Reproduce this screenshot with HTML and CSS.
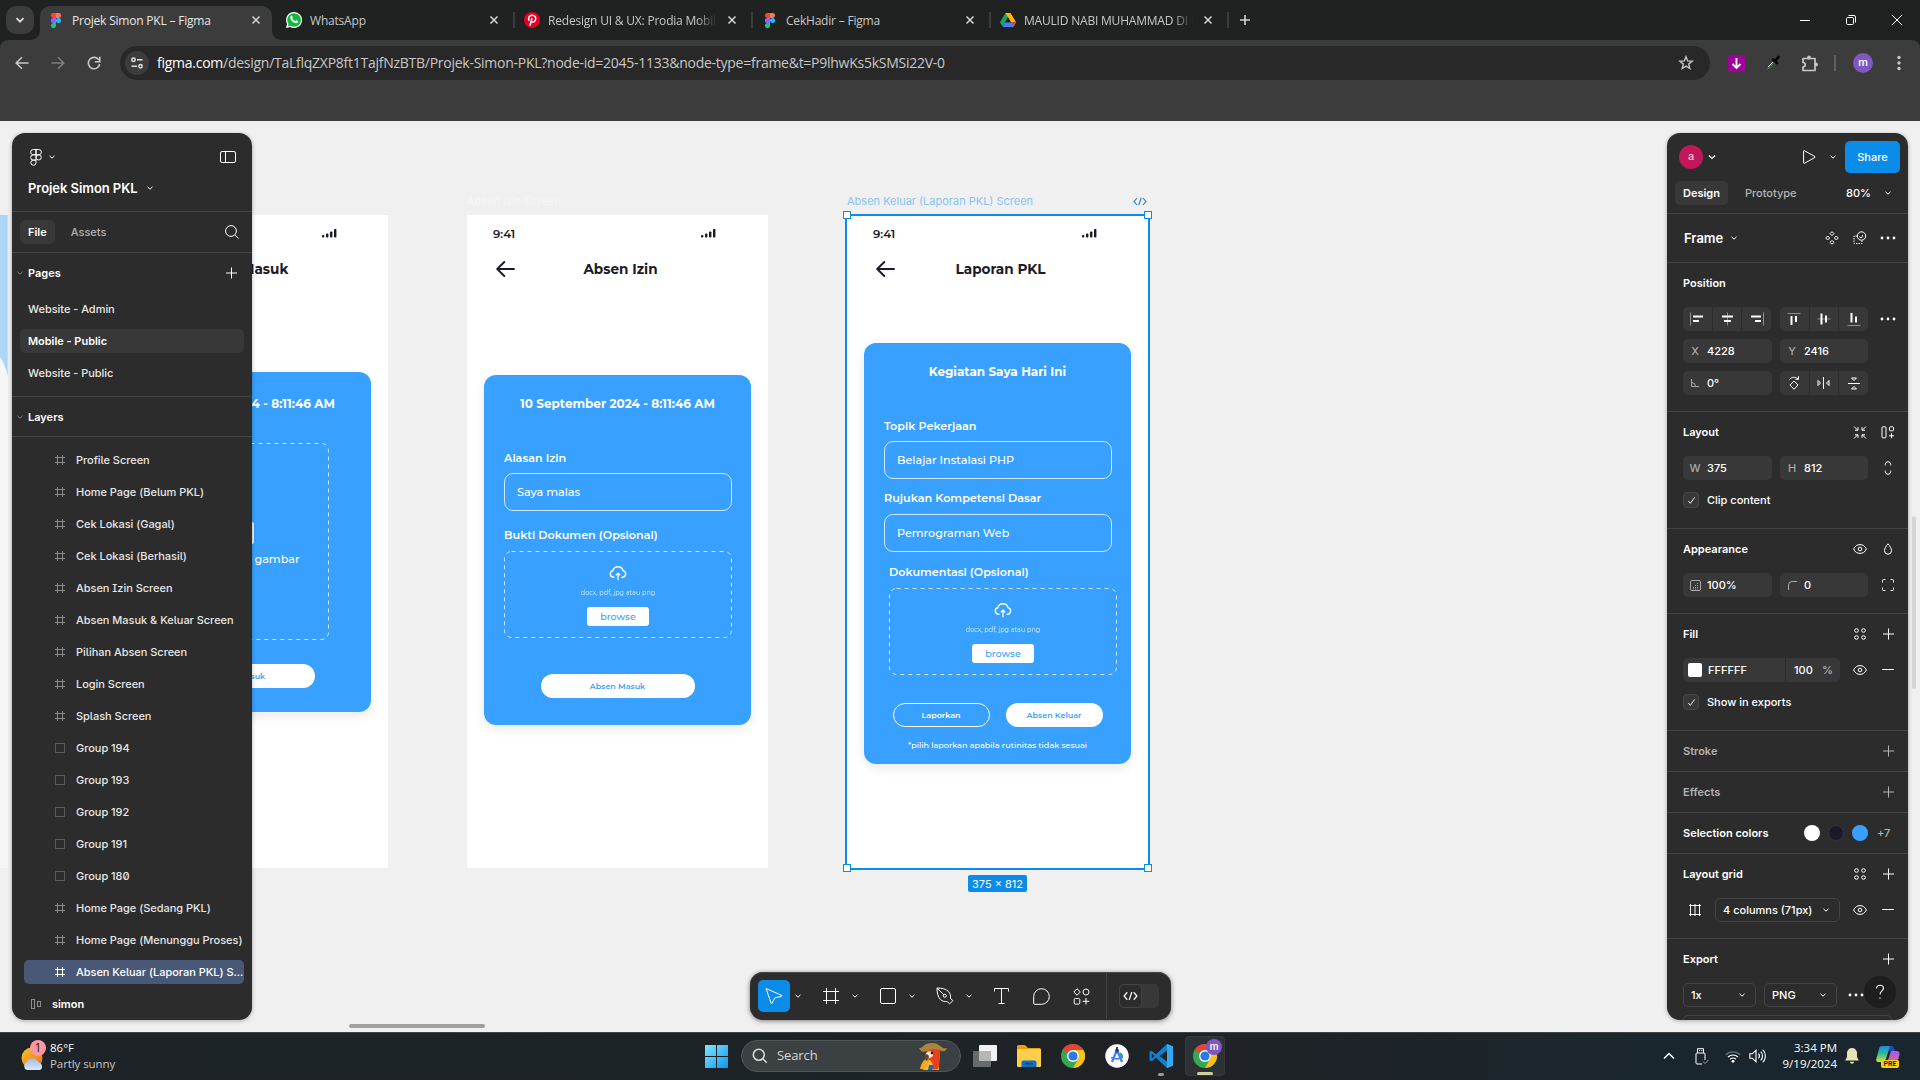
FILE: index.html
```html
<!DOCTYPE html>
<html lang="en">
<head>
<meta charset="utf-8">
<title>Projek Simon PKL – Figma</title>
<link rel="stylesheet" href="styles.css">
</head>
<body>
<svg class="sprite" aria-hidden="true">
  <symbol id="chev" viewBox="0 0 8 8"><path d="M1.500 2.800 4 5.200l2.500-2.400" fill="none" stroke="currentColor"/></symbol>
  <symbol id="x" viewBox="0 0 10 10"><path d="m1.500 1.500 7 7m0-7-7 7" fill="none" stroke="currentColor" stroke-width="1.500"/></symbol>
  <symbol id="plus" viewBox="0 0 12 12"><path d="M6.500 .5v11M1 6h11" fill="none" stroke="currentColor"/></symbol>
  <symbol id="minus" viewBox="0 0 12 12"><path d="M0 5.500h12" fill="none" stroke="currentColor"/></symbol>
  <symbol id="more" viewBox="0 0 16 4"><circle cx="2" cy="2" r="1.400"/><circle cx="8" cy="2" r="1.400"/><circle cx="14" cy="2" r="1.400"/></symbol>
  <symbol id="figma" viewBox="0 0 11 16"><path d="M2.700 0h2.800v5.300H2.700a2.650 2.650 0 0 1 0-5.300z" fill="#f24e1e"/><path d="M5.500 0h2.800a2.650 2.650 0 0 1 0 5.300H5.500z" fill="#ff7262"/><path d="M2.700 5.300h2.800v5.400H2.700a2.700 2.700 0 0 1 0-5.400z" fill="#a259ff"/><circle cx="8.200" cy="8" r="2.700" fill="#1abcfe"/><path d="M2.700 10.700h2.800v2.600a2.700 2.700 0 1 1-2.800-2.600z" fill="#0acf83"/></symbol>
  <symbol id="frame" viewBox="0 0 10 10"><path d="M2.500 0v10M7.500 0v10M0 2.500h10M0 7.500h10" fill="none" stroke="currentColor"/></symbol>
  <symbol id="group" viewBox="0 0 10 10"><rect x=".5" y=".5" width="9" height="9" fill="none" stroke="currentColor" stroke-dasharray="1 1"/></symbol>
  <symbol id="eye" viewBox="0 0 14 10"><path d="M.6 5C2 2 4.300.6 7 .6S12 2 13.400 5C12 8 9.700 9.400 7 9.400S2 8 .6 5z" fill="none" stroke="currentColor"/><circle cx="7" cy="5" r="1.800" fill="none" stroke="currentColor"/></symbol>
  <symbol id="four" viewBox="0 0 12 12"><g fill="none" stroke="currentColor"><circle cx="2.500" cy="2.500" r="1.800"/><circle cx="9.500" cy="2.500" r="1.800"/><circle cx="2.500" cy="9.500" r="1.800"/><circle cx="9.500" cy="9.500" r="1.800"/></g></symbol>
  <symbol id="check" viewBox="0 0 10 10"><path d="m1.500 5.500 2.200 2.700L8.500 1.500" fill="none" stroke="currentColor"/></symbol>
  <symbol id="signal" viewBox="0 0 15 9"><rect y="6" width="2.300" height="2.500" rx=".8"/><rect x="4" y="4.500" width="2.400" height="4" rx=".8"/><rect x="8" y="2.500" width="2.400" height="6" rx=".8"/><rect x="12" y="0" width="2.400" height="8.500" rx=".8"/></symbol>
  <symbol id="back" viewBox="0 0 19 16"><path d="M18 8H1.200M8.300 1 1.200 8l7.100 7" fill="none" stroke="currentColor" stroke-width="1.900" stroke-linecap="round" stroke-linejoin="round"/></symbol>
  <symbol id="cloud" viewBox="0 0 18 15"><path d="M5 11.200H4.300a3.300 3.300 0 0 1-.5-6.500A5.300 5.300 0 0 1 14 4.600a3.350 3.350 0 0 1-.3 6.600H13" fill="none" stroke="currentColor" stroke-width="1.400" stroke-linecap="round"/><path d="M9 14.200V7.500M6.800 9.300 9 7.200l2.200 2.100" fill="none" stroke="currentColor" stroke-width="1.300"/></symbol>
  <symbol id="code" viewBox="0 0 14 9"><path d="M4 1 1 4.500 4 8M10 1l3 3.500L10 8M8.200.8 5.800 8.200" fill="none" stroke="currentColor" stroke-width="1.100"/></symbol>
  <symbol id="chrome" viewBox="0 0 24 24"><circle cx="12" cy="12" r="12" fill="#34a853"/><path d="M12 0a12 12 0 0 1 10.400 6H12a6 6 0 0 0-5.200 3L1.600 6A12 12 0 0 1 12 0z" fill="#ea4335"/><path d="M22.400 6A12 12 0 0 1 12 24l5.200-9A6 6 0 0 0 17.200 9L12 6z" fill="#fbc116"/><circle cx="12" cy="12" r="6" fill="#fff"/><circle cx="12" cy="12" r="4.600" fill="#2a78ea"/></symbol>
</svg>

<header class="browser">
  <div class="tabstrip">
    <div class="tab-search"><svg width="10" height="10" viewBox="0 0 10 10"><path d="m1.500 3.200 3.500 3.500 3.500-3.500" fill="none" stroke="currentColor" stroke-width="1.800"/></svg></div>
    <div class="tab tab--active"><svg class="fav" width="16" height="15"><use href="#figma"/></svg><span class="tab-title">Projek Simon PKL – Figma</span><svg width="10" height="10"><use href="#x"/></svg></div>
    <div class="tab"><svg class="fav" width="16" height="16" viewBox="0 0 16 16"><path d="M8 0a8 8 0 1 1-3.800 15L0 16l1.100-4A8 8 0 0 1 8 0z" fill="#fff"/><path d="M8 1.200a6.800 6.800 0 1 1-3.600 12.500l-2.600.7.700-2.500A6.800 6.800 0 0 1 8 1.200z" fill="#12b83f"/><path d="M5.200 3.800c.8-.5 1.200.3 1.500 1.200.2.600-.5 1-.4 1.300a5 5 0 0 0 3 2.800c.4 0 .7-1 1.200-.8 1 .4 1.800.6 1.600 1.400-.3 1.300-1.700 1.700-3 1.300C6.600 10.200 4.800 8.300 4.300 6c-.2-1 .2-1.700.9-2.200z" fill="#fff"/></svg><span class="tab-title">WhatsApp</span><svg width="10" height="10"><use href="#x"/></svg></div>
    <div class="tab tab--split"><svg class="fav" width="16" height="16" viewBox="0 0 16 16"><circle cx="8" cy="8" r="8" fill="#e60023"/><path d="M6 13.800 8 6M5.300 8.800C3.600 6.500 5 3.200 8.200 3.200c3 0 4 2.300 3.300 4.600-.7 2.500-3.200 2.900-4 1.300" fill="none" stroke="#fff" stroke-width="1.500"/></svg><span class="tab-title tab-title--fade">Redesign UI &amp; UX: Prodia Mobile</span><svg width="10" height="10"><use href="#x"/></svg></div>
    <div class="tab tab--split"><svg class="fav" width="16" height="15"><use href="#figma"/></svg><span class="tab-title">CekHadir – Figma</span><svg width="10" height="10"><use href="#x"/></svg></div>
    <div class="tab tab--split"><svg class="fav" width="16" height="14" viewBox="0 0 16 14"><path d="M5.500 0h5L5.300 9l-2.800 4.500L0 9.200z" fill="#1ea362"/><path d="M5.500 0h5L16 9.200h-5z" fill="#ffba00"/><path d="M4.800 9.200H16L13.500 14h-11z" fill="#3f82f8"/><path d="M11 9.200h5L13.500 14z" fill="#ea4335"/><path d="M8 4.600 10.700 9.200H5.300z" fill="#1f2221"/></svg><span class="tab-title tab-title--fade">MAULID NABI MUHAMMAD DI ML</span><svg width="10" height="10"><use href="#x"/></svg></div>
    <div class="new-tab"><svg width="12" height="12" viewBox="0 0 12 12"><path d="M6 1v10M1 6h10" stroke="currentColor" stroke-width="1.600"/></svg></div>
    <div class="win-controls">
      <svg width="10" height="10" viewBox="0 0 10 10"><path d="M0 5.500h10" stroke="currentColor"/></svg>
      <svg width="10" height="10" viewBox="0 0 10 10"><g fill="none" stroke="currentColor"><rect x=".5" y="2.500" width="7" height="7" rx="1.200"/><path d="M2.500.5H8A1.500 1.500 0 0 1 9.500 2v5.500"/></g></svg>
      <svg width="10" height="10" viewBox="0 0 10 10"><path d="m0 0 10 10M10 0 0 10" stroke="currentColor"/></svg>
    </div>
  </div>
  <div class="toolbar">
    <svg width="14" height="14" viewBox="0 0 14 14"><path d="M13.500 7H1.500M7 1.200 1.200 7 7 12.800" fill="none" stroke="currentColor" stroke-width="1.600"/></svg>
    <svg class="dim" width="14" height="14" viewBox="0 0 14 14"><path d="M.5 7h12M7 1.200 12.800 7 7 12.800" fill="none" stroke="currentColor" stroke-width="1.600"/></svg>
    <svg width="14" height="14" viewBox="0 0 14 14"><path d="M12 4.200A5.700 5.700 0 1 0 12.700 8" fill="none" stroke="currentColor" stroke-width="1.600"/><path d="M12.800.8v5H7.800" fill="none" stroke="currentColor" stroke-width="1.600"/></svg>
    <div class="omnibox">
      <span class="site-info"><svg width="12" height="12" viewBox="0 0 12 12"><g fill="none" stroke="currentColor" stroke-width="1.500"><circle cx="2.500" cy="2.700" r="1.700"/><path d="M6 2.700h5.500M.5 9.300H6"/><circle cx="9.500" cy="9.300" r="1.700"/></g></svg></span>
      <span class="url"><b>figma.com</b>/design/TaLflqZXP8ft1TajfNzBTB/Projek-Simon-PKL?node-id=2045-1133&amp;node-type=frame&amp;t=P9lhwKs5kSMSi22V-0</span>
      <svg width="16" height="16" viewBox="0 0 16 16"><path d="m8 1.700 1.700 4.200 4.500.3-3.500 2.900 1.100 4.400L8 11.100l-3.800 2.400 1.100-4.400-3.500-2.900 4.500-.3z" fill="none" stroke="currentColor" stroke-width="1.400"/></svg>
    </div>
    <div class="ext">
      <svg width="17" height="17" viewBox="0 0 17 17"><rect width="17" height="17" rx="2.500" fill="#a3009b"/><path d="M8.500 3v9.500M4.500 9l4 4 4-4" fill="none" stroke="#fff" stroke-width="1.900"/></svg>
      <svg width="16" height="16" viewBox="0 0 16 16"><path d="m2 15 1-3 6-6.500 1.800 1.600L5 13.200z" fill="#4d5a4f"/><path d="m3 12 5-5" stroke="#d8e3d8"/><path d="m2.500 14 5-5" stroke="#2f8a36"/><path d="m8 4.500 4 3.500M10.500 5.500l3-3.500" stroke="#080808" stroke-width="2.600" stroke-linecap="round"/></svg>
      <svg width="17" height="17" viewBox="0 0 17 17"><path d="M2 3.500h12v12H2v-3.600a2.200 2.200 0 0 0 0-4.400z" fill="none" stroke="currentColor" stroke-width="1.700" stroke-linejoin="round"/><circle cx="8" cy="2.500" r="1.900" fill="currentColor"/><circle cx="15" cy="9.500" r="1.900" fill="currentColor"/></svg>
      <i class="ext-sep"></i>
      <span class="profile">m</span>
      <svg width="4" height="16" viewBox="0 0 4 16" fill="currentColor"><circle cx="2" cy="2.500" r="1.700"/><circle cx="2" cy="8" r="1.700"/><circle cx="2" cy="13.500" r="1.700"/></svg>
    </div>
  </div>
</header>

<main class="canvas">
  <div class="edge-frame"><svg width="8" height="162" viewBox="0 0 8 162"><path d="M0 0h7.700v161C6.500 154 3.500 147 0 142z" fill="#acd6f8"/></svg></div>

  <section class="phone phone--masuk">
    <div class="status"><span>9:41</span><svg width="15" height="9"><use href="#signal"/></svg></div>
    <div class="nav"><svg width="19" height="16"><use href="#back"/></svg><h2>Absen Masuk</h2></div>
    <div class="card">
      <h3>10 September 2024 - 8:11:46 AM</h3>
      <div class="photo"><svg class="dash"><rect x=".5" y=".5" width="181" height="196" rx="7"/></svg><i></i><span>Masukkan gambar</span></div>
      <span class="pill pill--wide">Absen Masuk</span>
    </div>
  </section>

  <span class="frame-label frame-label--faint">Absen Izin Screen</span>
  <section class="phone phone--izin">
    <div class="status"><span>9:41</span><svg width="15" height="9"><use href="#signal"/></svg></div>
    <div class="nav"><svg width="19" height="16"><use href="#back"/></svg><h2>Absen Izin</h2></div>
    <div class="card">
      <h3>10 September 2024 - 8:11:46 AM</h3>
      <label>Alasan Izin</label>
      <div class="input">Saya malas</div>
      <label class="l-bukti">Bukti Dokumen (Opsional)</label>
      <div class="drop"><svg class="dash"><rect x=".5" y=".5" width="227" height="86" rx="7"/></svg><svg width="18" height="15"><use href="#cloud"/></svg><small>docx, pdf, jpg atau png</small><span class="browse">browse</span></div>
      <span class="pill pill--wide">Absen Masuk</span>
    </div>
  </section>

  <div class="frame-label frame-label--selected"><span>Absen Keluar (Laporan PKL) Screen</span><svg width="14" height="9"><use href="#code"/></svg></div>
  <section class="phone phone--keluar">
    <div class="status"><span>9:41</span><svg width="15" height="9"><use href="#signal"/></svg></div>
    <div class="nav"><svg width="19" height="16"><use href="#back"/></svg><h2>Laporan PKL</h2></div>
    <div class="card">
      <h3>Kegiatan Saya Hari Ini</h3>
      <label>Topik Pekerjaan</label>
      <div class="input">Belajar Instalasi PHP</div>
      <label class="l-rujukan">Rujukan Kompetensi Dasar</label>
      <div class="input">Pemrograman Web</div>
      <div class="shifted">
        <label class="l-dok">Dokumentasi (Opsional)</label>
        <div class="drop"><svg class="dash"><rect x=".5" y=".5" width="227" height="86" rx="7"/></svg><svg width="18" height="15"><use href="#cloud"/></svg><small>docx, pdf, jpg atau png</small><span class="browse">browse</span></div>
      </div>
      <div class="actions"><span class="pill pill--ghost">Laporkan</span><span class="pill">Absen Keluar</span></div>
      <p class="note">*pilih laporkan apabila rutinitas tidak sesuai</p>
    </div>
    <div class="selection"><i></i><i></i><i></i><i></i></div>
  </section>
  <span class="size-badge">375 × 812</span>

  <i class="scroll-x"></i><i class="scroll-y"></i>

  <aside class="panel left">
    <div class="left-head">
      <div class="row">
        <svg width="12" height="17" viewBox="0 0 12 17"><g fill="none" stroke="currentColor"><path d="M6 .500H3.300a2.600 2.600 0 0 0 0 5.300H6zM6 .5h2.700a2.600 2.600 0 0 1 0 5.300H6zM6 5.800H3.300a2.600 2.600 0 0 0 0 5.300H6z"/><circle cx="8.700" cy="8.400" r="2.600"/><path d="M6 11.100H3.300A2.600 2.600 0 1 0 6 13.700z"/></g></svg>
        <svg class="chev" width="8" height="8"><use href="#chev"/></svg>
        <svg class="push" width="16" height="12" viewBox="0 0 16 12"><g fill="none" stroke="currentColor"><rect x=".5" y=".5" width="15" height="11" rx="1.500"/><path d="M5.500.5v11"/></g></svg>
      </div>
      <div class="row file-name"><b>Projek Simon PKL</b><svg class="chev" width="8" height="8"><use href="#chev"/></svg></div>
    </div>
    <div class="left-tabs"><span class="chip">File</span><span class="muted">Assets</span><svg class="push" width="14" height="14" viewBox="0 0 14 14"><g fill="none" stroke="currentColor"><circle cx="6" cy="6" r="5.400"/><path d="m10 10 3.500 3.500"/></g></svg></div>
    <div class="pages">
      <div class="sec-title"><svg class="muted" width="8" height="8"><use href="#chev"/></svg><b>Pages</b><svg class="push" width="12" height="12"><use href="#plus"/></svg></div>
      <ul><li>Website - Admin</li><li class="current">Mobile - Public</li><li>Website - Public</li></ul>
    </div>
    <div class="layers-title sec-title"><svg class="muted" width="8" height="8"><use href="#chev"/></svg><b>Layers</b></div>
    <ul class="layers">
      <li><svg><use href="#frame"/></svg>Profile Screen</li>
      <li><svg><use href="#frame"/></svg>Home Page (Belum PKL)</li>
      <li><svg><use href="#frame"/></svg>Cek Lokasi (Gagal)</li>
      <li><svg><use href="#frame"/></svg>Cek Lokasi (Berhasil)</li>
      <li><svg><use href="#frame"/></svg>Absen Izin Screen</li>
      <li><svg><use href="#frame"/></svg>Absen Masuk &amp; Keluar Screen</li>
      <li><svg><use href="#frame"/></svg>Pilihan Absen Screen</li>
      <li><svg><use href="#frame"/></svg>Login Screen</li>
      <li><svg><use href="#frame"/></svg>Splash Screen</li>
      <li><svg><use href="#group"/></svg>Group 194</li>
      <li><svg><use href="#group"/></svg>Group 193</li>
      <li><svg><use href="#group"/></svg>Group 192</li>
      <li><svg><use href="#group"/></svg>Group 191</li>
      <li><svg><use href="#group"/></svg>Group 180</li>
      <li><svg><use href="#frame"/></svg>Home Page (Sedang PKL)</li>
      <li><svg><use href="#frame"/></svg>Home Page (Menunggu Proses)</li>
      <li class="picked"><svg><use href="#frame"/></svg>Absen Keluar (Laporan PKL) S...</li>
      <li class="root"><svg viewBox="0 0 10 10"><g fill="none" stroke="currentColor"><rect x=".5" y=".5" width="3" height="9"/><rect x="6.500" y="2.500" width="3" height="5"/></g></svg>simon</li>
    </ul>
  </aside>

  <aside class="panel right">
    <div class="top">
      <span class="avatar">a</span><svg class="chev" width="10" height="10"><use href="#chev"/></svg>
      <svg class="push" width="13" height="14" viewBox="0 0 13 14"><path d="M.6 1.200v11.600c0 .5.400.7.800.5L12 7.400c.3-.2.300-.6 0-.8L1.400.7C1 .5.600.700.6 1.200z" fill="none" stroke="currentColor"/></svg>
      <svg class="chev play-chev" width="8" height="8"><use href="#chev"/></svg><span class="share">Share</span>
    </div>
    <div class="modes"><span class="chip">Design</span><span class="muted">Prototype</span><span class="push">80%</span><svg class="chev" width="8" height="8"><use href="#chev"/></svg></div>
    <div class="kind"><b>Frame</b><svg class="chev" width="8" height="8"><use href="#chev"/></svg>
      <span class="tools"><svg width="14" height="14" viewBox="0 0 14 14"><g fill="none" stroke="currentColor"><path d="m7 .7 2 2-2 2-2-2zM7 9.300l2 2-2 2-2-2zM2.700 5l2 2-2 2-2-2zM11.300 5l2 2-2 2-2-2z"/></g></svg><svg width="14" height="14" viewBox="0 0 14 14"><g fill="none" stroke="currentColor"><circle cx="8.500" cy="5" r="4.200"/><path d="M4 5H1v7.500h8v-3" stroke-dasharray="1.500 1"/><path d="M6.500 5.500c0 1.500 3 1.500 3 0V4"/></g></svg><svg width="16" height="4" fill="currentColor"><use href="#more"/></svg></span></div>
    <div class="sect position"><div class="head"><b>Position</b></div>
      <div class="grid">
        <div class="trio"><span><svg width="14" height="14" viewBox="0 0 14 14"><path class="thin" d="M.5.5v13"/><path class="bar" d="M3 4.500h10M3 9h6"/></svg></span><span><svg width="14" height="14" viewBox="0 0 14 14"><path class="thin" d="M7.500.5v13"/><path class="bar" d="M2 4.500h11M4 9h7"/></svg></span><span><svg width="14" height="14" viewBox="0 0 14 14"><path class="thin" d="M13.500.5v13"/><path class="bar" d="M1 4.500h10M5 9h6"/></svg></span></div>
        <div class="trio"><span><svg width="14" height="14" viewBox="0 0 14 14"><path class="thin" d="M.5 1.500h13"/><path class="bar" d="M4.500 4v9M9 4v6"/></svg></span><span><svg width="14" height="14" viewBox="0 0 14 14"><path class="thin" d="M.5 7h13"/><path class="bar" d="M4.500 1.500v11M9 3.500v7"/></svg></span><span><svg width="14" height="14" viewBox="0 0 14 14"><path class="thin" d="M.5 13.500h13"/><path class="bar" d="M4.500 1v9.500M9 4.500v6"/></svg></span></div>
        <svg width="16" height="4" fill="currentColor"><use href="#more"/></svg>
        <div class="field"><em>X</em>4228</div><div class="field"><em>Y</em>2416</div><i></i>
        <div class="field"><em><svg width="8" height="8" viewBox="0 0 8 8"><path d="M.5 0v7.500H8M.5 3.500A4 4 0 0 1 4.500 7.500" fill="none" stroke="currentColor"/></svg></em>0°</div>
        <div class="trio"><span><svg width="12" height="14" viewBox="0 0 12 14"><path d="m6 5 4 4-4 4.300L2 9zM1.500 3.500C3.500.8 7 .6 10 2.800M10.500.2v3.100H7.500" fill="none" stroke="currentColor"/></svg></span><span><svg width="13" height="12" viewBox="0 0 13 12"><path d="M6.500 0v12M1 3.500 3.500 6 1 8.500zM12 3.500 9.500 6 12 8.500z" fill="none" stroke="currentColor"/></svg></span><span><svg width="12" height="13" viewBox="0 0 12 13"><path d="M0 6.500h12M3.500 1h5L6 3.500zM3.500 12h5L6 9.500z" fill="none" stroke="currentColor"/></svg></span></div>
      </div>
    </div>
    <div class="sect layout"><div class="head"><b>Layout</b><span class="tools"><svg width="13" height="13" viewBox="0 0 13 13"><path d="M.5.5 4 4M1.500 4.200h3v-3M12.500.5 9 4M11.500 4.200h-3v-3M.5 12.500 4 9M1.500 8.800h3v3M12.500 12.500 9 9M11.500 8.800h-3v3" fill="none" stroke="currentColor"/></svg><svg width="13" height="13" viewBox="0 0 13 13"><g fill="none" stroke="currentColor"><rect x=".5" y=".8" width="4" height="11" rx=".8"/><rect x="8" y=".8" width="4" height="4" rx=".8"/><path d="M10 7.300v5M7.500 9.800h5"/></g></svg></span></div>
      <div class="grid"><div class="field"><em>W</em>375</div><div class="field"><em>H</em>812</div><svg width="8" height="14" viewBox="0 0 8 14"><path d="M1.300 4.500V3.400a2.700 2.700 0 0 1 5.400 0v1.100M1.300 9.500v1.100a2.700 2.700 0 0 0 5.400 0V9.500" fill="none" stroke="currentColor"/></svg></div>
      <div class="tick"><i><svg width="10" height="10"><use href="#check"/></svg></i>Clip content</div>
    </div>
    <div class="sect"><div class="head"><b>Appearance</b><span class="tools"><svg width="14" height="10"><use href="#eye"/></svg><svg width="9" height="12" viewBox="0 0 9 12"><path d="M4.500.8C6.500 3.300 8 5.300 8 7.700a3.500 3.500 0 0 1-7 0C1 5.300 2.500 3.300 4.500.8z" fill="none" stroke="currentColor"/></svg></span></div>
      <div class="grid"><div class="field"><em><svg width="11" height="11" viewBox="0 0 11 11"><rect x=".5" y=".5" width="10" height="10" rx="1.500" fill="none" stroke="currentColor"/><path d="M7 3.500h2M5 5.500h4M3 7.500h6M3 9h6" stroke="currentColor" stroke-dasharray="1 1"/></svg></em>100%</div><div class="field"><em><svg width="9" height="9" viewBox="0 0 9 9"><path d="M.5 9V4a3.500 3.500 0 0 1 3.500-3.500h5" fill="none" stroke="currentColor"/></svg></em>0</div><svg width="12" height="12" viewBox="0 0 12 12"><path d="M.5 3.500v-2a1 1 0 0 1 1-1h2M8.500.5h2a1 1 0 0 1 1 1v2M11.500 8.500v2a1 1 0 0 1-1 1h-2M3.500 11.500h-2a1 1 0 0 1-1-1v-2" fill="none" stroke="currentColor"/></svg></div>
    </div>
    <div class="sect fill"><div class="head"><b>Fill</b><span class="tools"><svg width="12" height="12"><use href="#four"/></svg><svg width="12" height="12"><use href="#plus"/></svg></span></div>
      <div class="paint"><div class="hex"><i></i>FFFFFF</div><div class="alpha">100<em>%</em></div><span class="tools"><svg width="14" height="10"><use href="#eye"/></svg><svg width="12" height="12"><use href="#minus"/></svg></span></div>
      <div class="tick"><i><svg width="10" height="10"><use href="#check"/></svg></i>Show in exports</div>
    </div>
    <div class="slim muted"><b>Stroke</b><span class="tools"><svg width="12" height="12"><use href="#plus"/></svg></span></div>
    <div class="slim muted"><b>Effects</b><span class="tools"><svg width="12" height="12"><use href="#plus"/></svg></span></div>
    <div class="slim swatches"><b>Selection colors</b><i class="white push"></i><i class="navy"></i><i class="blue"></i><span class="muted">+7</span></div>
    <div class="sect gridsec"><div class="head"><b>Layout grid</b><span class="tools"><svg width="12" height="12"><use href="#four"/></svg><svg width="12" height="12"><use href="#plus"/></svg></span></div>
      <div class="paint"><svg class="cols" width="12" height="12" viewBox="0 0 12 12"><path d="M1.500 0v12M6 0v12M10.500 0v12M0 1.500h12M0 10.500h12" fill="none" stroke="currentColor"/></svg><div class="select select--grid">4 columns (71px)<svg width="8" height="8"><use href="#chev"/></svg></div><span class="tools"><svg width="14" height="10"><use href="#eye"/></svg><svg width="12" height="12"><use href="#minus"/></svg></span></div>
    </div>
    <div class="sect export"><div class="head"><b>Export</b><span class="tools"><svg width="12" height="12"><use href="#plus"/></svg></span></div>
      <div class="exports"><div class="select">1x<svg width="8" height="8"><use href="#chev"/></svg></div><div class="select">PNG<svg width="8" height="8"><use href="#chev"/></svg></div><svg width="16" height="4" fill="currentColor"><use href="#more"/></svg></div>
      <div class="export-btn"></div>
    </div>
    <span class="help"><svg width="10" height="16" viewBox="0 0 10 16"><path d="M1.500 4.500C1.500 2.300 3 1.300 5 1.300s3.500 1.200 3.500 3C8.500 7 5 7 5 10.500M5 13.500v1.200" fill="none" stroke="currentColor" stroke-width="1.100"/></svg></span>
  </aside>

  <div class="dock">
    <span class="active"><svg width="18" height="18" viewBox="0 0 18 18"><path d="m1 1.500 5.200 14.700c.2.500.8.500 1 .1l2.500-5.400 6.700-1.500c.6-.1.700-.8.200-1.100z" fill="none" stroke="currentColor" stroke-linejoin="round"/></svg></span><svg class="chev" width="8" height="8"><use href="#chev"/></svg>
    <span><svg width="16" height="16" viewBox="0 0 16 16"><path d="M3.500 0v16M12.500 0v16M0 3.500h16M0 12.500h16" stroke="currentColor"/></svg></span><svg class="chev" width="8" height="8"><use href="#chev"/></svg>
    <span><svg width="16" height="16" viewBox="0 0 16 16"><rect x=".5" y=".5" width="15" height="15" rx="1.500" fill="none" stroke="currentColor"/></svg></span><svg class="chev" width="8" height="8"><use href="#chev"/></svg>
    <span><svg width="18" height="18" viewBox="0 0 18 18"><g fill="none" stroke="currentColor" stroke-linejoin="round"><path d="M1 1c4.500 0 9 .8 11.500 3.500 2 2.200 2 4.200 2 6.700l2.300 2.500-3.200 3.200-2.400-2.300c-2.500 0-4.500-.1-6.700-2C1.800 10 1 5.500 1 1zM1 1l6.700 6.700"/><circle cx="8.800" cy="8.800" r="1.500"/></g></svg></span><svg class="chev" width="8" height="8"><use href="#chev"/></svg>
    <span class="solo"><svg width="15" height="16" viewBox="0 0 15 16"><path d="M.5 3.500v-3h14v3M7.500.5v15M4.500 15.500h6" fill="none" stroke="currentColor"/></svg></span>
    <span class="solo"><svg width="17" height="17" viewBox="0 0 17 17"><path d="M8.500.7a7.800 7.800 0 0 1 0 15.600H1.700a1 1 0 0 1-1-1V8.500A7.800 7.800 0 0 1 8.500.7z" fill="none" stroke="currentColor"/></svg></span>
    <span class="solo"><svg width="17" height="17" viewBox="0 0 17 17"><g fill="none" stroke="currentColor"><path d="M4 .8 7.300 4 4 7.200.8 4z"/><circle cx="13" cy="4" r="3"/><rect x="1.200" y="10.500" width="5.600" height="5.600" rx="1.200"/><path d="M13 10v6.500M9.700 13.300h6.600"/></g></svg></span>
    <div class="dev"><span class="toggle"><i><svg width="15" height="10"><use href="#code"/></svg></i></span></div>
  </div>
</main>

<footer class="taskbar">
  <div class="weather">
    <span class="weather-icon"><svg width="24" height="30" viewBox="0 0 24 30"><defs><linearGradient id="sun" x2="1" y2="1"><stop stop-color="#f8c62c"/><stop offset="1" stop-color="#ef6a18"/></linearGradient><linearGradient id="cl" x2="0" y2="1"><stop stop-color="#9ebcf0"/><stop offset="1" stop-color="#dbe7fb"/></linearGradient></defs><circle cx="11" cy="17" r="10.500" fill="url(#sun)"/><path d="M6 29a4 4 0 0 1-.5-7.500 6.500 6.500 0 0 1 12 0A4 4 0 0 1 19 29z" fill="url(#cl)"/></svg><b>1</b></span>
    <span class="weather-text">86°F<small>Partly sunny</small></span>
  </div>
  <div class="apps">
    <svg class="start" width="23" height="23" viewBox="0 0 23 23"><defs><linearGradient id="win" x2="1" y2="1"><stop stop-color="#7ee6ff"/><stop offset="1" stop-color="#0f96ee"/></linearGradient></defs><path d="M0 0h11v11H0zM12 0h11v11H12zM0 12h11v11H0zM12 12h11v11H12z" fill="url(#win)"/></svg>
    <div class="search"><svg width="16" height="16" viewBox="0 0 16 16"><g fill="none" stroke="currentColor" stroke-width="1.600"><circle cx="6.800" cy="6.800" r="5.500"/><path d="m10.800 10.800 4 4"/></g></svg><span>Search</span>
      <svg class="push" width="28" height="27" viewBox="0 0 28 27"><path d="M1 26c1-6 5-11 10-13l9 3v11z" fill="#f7a823"/><path d="M8 8c1-5 12-6 13 1 .5 6-.5 12-2 17h-7c3-4 2-7-2-9-3-2-3-6-2-9z" fill="#e8401c"/><path d="M10 17c3 2 5 5 3 10H3c4-1 6-5 7-10z" fill="#f6bd2d"/><path d="M10 22h5l-2 5H9z" fill="#1d69a8"/><path d="M8 9c3-2 6 0 6 4-2 2-5 2-7 4-1-3-1-6 1-8z" fill="#f6e5c1"/><path d="M6 12c2-2 4 0 4 2l-2 4c-2-1-3-4-2-6z" fill="#5c4735"/><circle cx="13" cy="10" r="1.200" fill="#111"/><path d="M0 5c4 1 4-5 13-5s9 7 15 5c-2 5-5 3-8 2-5-2-8-1-12 1S1 8 0 5z" fill="#a8843f"/></svg></div>
    <svg width="24" height="22" viewBox="0 0 24 22"><rect x="6" width="18" height="16" rx="1" fill="#f2f2f2"/><rect y="6" width="18" height="16" rx="1" fill="#666b6d"/><path d="M6 6h12v10H6z" fill="#b4b6b7"/></svg>
    <svg width="24" height="22" viewBox="0 0 24 22"><path d="M0 1.500Q0 0 1.500 0H8l3 3h11.500Q24 3 24 4.500V8H0z" fill="#e5a10a"/><rect y="4" width="24" height="18" rx="1.200" fill="#ffcf4b"/><path d="M4.500 22v-4.500q0-2 2-2h11q2 0 2 2V22z" fill="#0f6fbd"/><path d="M8 18h8v1.500H8z" fill="#0a4f8d"/></svg>
    <svg width="24" height="24"><use href="#chrome"/></svg>
    <svg width="24" height="24" viewBox="0 0 24 24"><circle cx="12" cy="12" r="11.700" fill="#fff"/><circle cx="12" cy="12" r="11" fill="none" stroke="#dfe6ee" stroke-dasharray="2 2"/><path d="M15 8.500c4 1 4 6 0 7z" fill="#33a853"/><path d="m11.500 7-4.500 11M12.500 7 17 18" stroke="#4285f4" stroke-width="2.300"/><path d="M6 13.500q6 3 12-.5" fill="none" stroke="#4285f4" stroke-width="1.800"/><circle cx="12" cy="7" r="2.200" fill="#2b5fb8"/><path d="M12 3v4" stroke="#263238" stroke-width="1.800"/></svg>
    <span class="app running"><svg width="24" height="24" viewBox="0 0 24 24"><path d="M18 0 7 10.200 2.500 6.700.5 7.800v8.400l2 1.100L7 13.800 18 24l6-2.500v-19z" fill="#0d83cf"/><path d="M18 0v24l6-2.500v-19z" fill="#35a9f0"/><path d="M18 6.500v11L10.500 12z" fill="#1d2327"/><path d="m2.800 9.500 2.500 2.500-2.500 2.500z" fill="#1d2327"/></svg></span>
    <span class="app current"><svg width="24" height="24"><use href="#chrome"/></svg><b>m</b></span>
  </div>
  <div class="tray">
    <svg width="12" height="8" viewBox="0 0 12 8"><path d="m1 6.500 5-5 5 5" fill="none" stroke="currentColor" stroke-width="1.500"/></svg>
    <svg width="14" height="17" viewBox="0 0 14 17"><path d="M2.500 5V.7h6V5M7 16H2a1 1 0 0 1-1-1V6a1 1 0 0 1 1-1h7a1 1 0 0 1 1 1v6" fill="none" stroke="currentColor"/><path d="M4 2.500h1M6.300 2.500h1" stroke="currentColor"/><path d="m8 13.500 2 2 3.500-3.500" fill="none" stroke="#9ba1a4"/></svg>
    <svg width="16" height="13" viewBox="0 0 16 13"><g fill="none" stroke="currentColor" stroke-width="1.200"><path d="M.7 4.800a10.400 10.400 0 0 1 14.600 0" stroke="#687176"/><path d="M3 7a7.200 7.200 0 0 1 10 0M5.200 9.200a4 4 0 0 1 5.600 0"/></g><circle cx="8" cy="11.300" r="1.400" fill="currentColor"/></svg>
    <svg width="17" height="14" viewBox="0 0 17 14"><path d="M.8 4.800h2.500L7 1.300v11.400L3.300 9.200H.8zM9.500 4.700a3.500 3.500 0 0 1 0 4.600M11.700 2.700a6 6 0 0 1 0 8.600M13.800.7a9 9 0 0 1 0 12.600" fill="none" stroke="currentColor" stroke-width="1.100"/></svg>
    <span class="clock">3:34 PM<br>9/19/2024</span>
    <svg width="14" height="16" viewBox="0 0 14 16"><path d="M7 0a5 5 0 0 1 5 5v4l1.800 3.500H.2L2 9V5a5 5 0 0 1 5-5z" fill="#e9e2b8"/><path d="M5 13.800h4a2 2 0 0 1-4 0z" fill="#e9e2b8"/></svg>
    <span class="copilot"><svg width="24" height="20" viewBox="0 0 24 20"><defs><linearGradient id="ca" x2="0" y2="1"><stop stop-color="#1d87e8"/><stop offset=".5" stop-color="#2cc08a"/><stop offset="1" stop-color="#e8d53a"/></linearGradient><linearGradient id="cb" x2="0" y2="1"><stop stop-color="#a35cf0"/><stop offset="1" stop-color="#f2647b"/></linearGradient></defs><path d="M10 0h6c2 0 2 2 3 5h-5z" fill="#2148b8"/><path d="M6 0h8l-4 13c-1 2-2 3-4 3H2c-2 0-2-2-1.500-4L3 3c.5-2 1-3 3-3z" fill="url(#ca)"/><path d="M15 5h6c2 0 3 2 2.500 4L21 17c-.5 2-2 3-4 3h-7z" fill="url(#cb)"/></svg><b>PRE</b></span>
  </div>
</footer>
</body>
</html>
```
FILE: styles.css
```css
* { box-sizing: border-box; }
body {
  margin: 0; width: 1920px; height: 1080px; overflow: hidden;
  display: flex; flex-direction: column;
  font-family: Inter, "Noto Sans", sans-serif; font-size: 11px; font-weight: 500;
  background: #f0f0f0; color: #fff;
}
svg { display: block; flex: none; }
.sprite { position: absolute; width: 0; height: 0; }
ul { list-style: none; margin: 0; padding: 0; }
b { font-weight: 600; }
em { font-style: normal; }
.push { margin-left: auto; }
.muted { color: #b3b3b3; }

/* browser chrome */
.browser { flex: none; height: 121px; background: #1f2221; font-family: "Open Sans", "Noto Sans", sans-serif; font-weight: 400; }
.tabstrip { height: 40px; display: flex; align-items: center; padding-left: 6px; color: #dcdcdc; }
.tab-search { width: 28px; height: 28px; border-radius: 10px; background: #3c3c3c; display: grid; place-items: center; margin-right: 6px; }
.tab { position: relative; width: 238px; height: 34px; margin-top: 6px; padding: 0 17px 6px 8px; display: flex; align-items: center; font-size: 12px; color: #c7c7c7; }
.tab--active { width: 232px; margin-right: 6px; padding-right: 11px; background: #3c3c3c; border-radius: 10px 10px 0 0; color: #e6e6e6; }
.tab--active::before, .tab--active::after { content: ""; position: absolute; bottom: 0; width: 9px; height: 9px; }
.tab--active::before { left: -9px; background: radial-gradient(circle at 0 0, transparent 8.500px, #3c3c3c 9px); }
.tab--active::after { right: -9px; background: radial-gradient(circle at 100% 0, transparent 8.500px, #3c3c3c 9px); }
.tab--split::before { content: ""; position: absolute; left: -3px; top: 6px; width: 2px; height: 16px; background: #3c3c3c; }
.tab-title { flex: 1; margin: 0 10px 0 8px; white-space: nowrap; overflow: hidden; letter-spacing: -.2px; }
.tab-title--fade { -webkit-mask-image: linear-gradient(90deg, #000 88%, transparent); mask-image: linear-gradient(90deg, #000 88%, transparent); }
.tab > svg:last-child { color: #d5d5d5; }
.new-tab { position: relative; width: 30px; display: grid; place-items: center; color: #d5d5d5; }
.new-tab::before { content: ""; position: absolute; left: -3px; top: -2px; width: 2px; height: 16px; background: #3c3c3c; }
.win-controls { margin-left: auto; display: flex; gap: 36px; padding-right: 18px; color: #fff; }
.toolbar { height: 81px; padding: 6px 20px 0 15px; background: #3c3c3c; border-radius: 8px 8px 0 0; display: flex; align-items: flex-start; color: #c7c7c7; }
.toolbar > svg { margin: 10px 22px 0 0; }
.toolbar > svg:nth-of-type(3) { margin-right: 19px; }
.dim { color: #7e7e7e; }
.omnibox { flex: none; width: 1590px; height: 34px; border-radius: 17px; background: #282828; display: flex; align-items: center; padding: 0 16px 0 5px; }
.site-info { width: 24px; height: 24px; border-radius: 50%; background: #3c3c3c; display: grid; place-items: center; color: #e0e0e0; }
.url { flex: 1; margin: -2px 0 0 8px; font-size: 14px; letter-spacing: -.26px; color: #c7c7c7; white-space: nowrap; }
.url b { font-weight: 400; color: #fff; }
.ext { height: 34px; margin-left: 18px; display: flex; align-items: center; flex: none; }
.ext svg:nth-of-type(2) { margin-left: 20px; }
.ext svg:nth-of-type(3) { margin-left: 20px; }
.ext-sep { width: 2px; height: 16px; background: #5f5f5f; margin-left: 16px; }
.profile { width: 20px; height: 20px; margin: 0 24px 0 17px; border-radius: 50%; background: #7e57c2; color: #fff; font: 500 11px/19px Roboto, sans-serif; text-align: center; }

/* canvas */
.canvas { position: relative; flex: 1; overflow: hidden; background: #f0f0f0; }
.edge-frame { position: absolute; left: 0; top: 94px; width: 8px; height: 653px; background: #f6f6f6; }
.scroll-x { position: absolute; left: 349px; top: 903px; width: 136px; height: 4px; border-radius: 2px; background: #a0a0a0; }
.scroll-y { position: absolute; left: 1912px; top: 395px; width: 4px; height: 173px; border-radius: 2px; background: #d6d6d6; }
.frame-label { position: absolute; top: 73px; height: 14px; line-height: 14px; font-weight: 400; white-space: nowrap; }
.frame-label--faint { left: 467px; color: #f6f6f6; }
.frame-label--selected { left: 847px; width: 300px; display: flex; align-items: center; justify-content: space-between; color: #85c5f4; }
.frame-label--selected svg { color: #1c79c4; }
.size-badge { position: absolute; left: 968px; top: 754px; width: 59px; height: 17px; border-radius: 2px; background: #0c8ce9; text-align: center; line-height: 18px; font-weight: 400; }

/* phone frames */
.phone { position: absolute; top: 94px; width: 301px; height: 653px; background: #fff; color: #1a1a2b; font-family: Montserrat, Inter, sans-serif; }
.phone--masuk { left: 87px; }
.phone--izin { left: 467px; }
.phone--keluar { left: 847px; }
.status { height: 37px; padding: 0 51px 0 26px; display: flex; align-items: center; justify-content: space-between; font-size: 11.700px; font-weight: 600; }
.phone--izin .status { padding-right: 52px; }
.status svg { fill: currentColor; }
.nav { height: 35px; margin-top: -1px; padding-left: 29px; display: flex; align-items: center; }
.nav h2 { flex: 1; margin: 0 0 0 11px; padding-right: 53px; text-align: center; font-size: 13.600px; font-weight: 700; }
.card { width: 267px; margin: 89px 0 0 17px; padding: 19px 20px 0; border-radius: 12px; background: #38a1ff; color: #fff; display: flex; flex-direction: column; box-shadow: 0 4px 12px rgba(0,0,0,.09); }
.phone--izin .card { height: 350px; }
.phone--masuk .card { height: 340px; margin-top: 86px; padding-top: 22px; align-items: center; }
.phone--keluar .card { height: 421px; margin-top: 57px; }
h3 { margin: 0; height: 20px; line-height: 20px; text-align: center; font-size: 12px; font-weight: 700; white-space: nowrap; }
label { height: 16px; line-height: 16px; margin-top: 36px; font-size: 11.200px; font-weight: 600; white-space: nowrap; }
.l-bukti { margin-top: 16px; }
.l-rujukan { margin-top: 11px; }
.l-dok { margin-top: 0; }
.input { width: 228px; height: 38px; margin-top: 7px; padding-left: 12px; border: 1px solid rgba(255,255,255,.75); border-radius: 9px; line-height: 37px; font-size: 11.200px; font-weight: 500; }
.l-rujukan + .input { margin-top: 8px; }
.shifted { margin: 12px 0 0 5px; display: flex; flex-direction: column; }
.drop { position: relative; width: 228px; height: 87px; margin-top: 8px; padding-top: 15px; display: flex; flex-direction: column; align-items: center; }
.dash { position: absolute; inset: 0; width: 100%; height: 100%; }
.dash rect { fill: none; stroke: rgba(255,255,255,.75); stroke-dasharray: 4 4; }
small { font-size: 6.500px; line-height: 12px; margin-top: 6px; font-weight: 400; opacity: .8; }
.browse { width: 62px; height: 19px; margin-top: 8px; border-radius: 3px; background: #fff; color: #38a1ff; text-align: center; line-height: 19px; font-size: 9.600px; font-weight: 500; }
.pill { width: 97px; height: 24px; border-radius: 12px; background: #fff; color: #38a1ff; text-align: center; line-height: 25px; font-size: 8px; font-weight: 600; }
.pill--wide { width: 154px; margin-top: 36px; align-self: center; }
.pill--ghost { background: none; border: 1px solid #fff; color: #fff; line-height: 23px; }
.actions { display: flex; justify-content: center; gap: 16px; margin-top: 28px; }
.note { margin: 11px 0 0; line-height: 14px; text-align: center; font-size: 8.100px; white-space: nowrap; }
.photo { position: relative; width: 182px; height: 197px; margin-top: 29px; padding: 79px 29px 0 0; display: flex; flex-direction: column; align-items: flex-end; font-size: 11.200px; }
.photo > i { width: 40px; height: 22px; margin-right: 46px; border-radius: 2px; background: #f1f1f1; }
.photo > span { margin-top: 8px; line-height: 14px; white-space: nowrap; }
.phone--masuk .pill { margin-top: 24px; }
.selection { position: absolute; inset: -1px -2px -2px; border: 2px solid #0c8ce9; }
.selection i { position: absolute; width: 8px; height: 8px; background: #fff; border: 1px solid #0c8ce9; }
.selection i:nth-child(1) { left: -4px; top: -5px; }
.selection i:nth-child(2) { right: -4px; top: -5px; }
.selection i:nth-child(3) { left: -4px; bottom: -4px; }
.selection i:nth-child(4) { right: -4px; bottom: -4px; }

/* floating panels */
.panel { position: absolute; top: 12px; height: 887px; border-radius: 13px; background: #2c2c2c; overflow: hidden; box-shadow: 0 1px 4px rgba(0,0,0,.3); }
.left { left: 12px; width: 240px; }
.left-head { height: 79px; padding: 15px 16px 0 18px; border-bottom: 1px solid #444; }
.row { display: flex; align-items: center; height: 18px; }
.row .chev { margin-left: 6px; }
.file-name { margin: 13px 0 0 -2px; font-size: 13px; letter-spacing: -.06px; }
.file-name .chev { margin-left: 8px; }
.left-tabs { height: 41px; padding: 0 13px 0 8px; display: flex; align-items: center; border-bottom: 1px solid #444; }
.chip { height: 24px; line-height: 24px; padding: 0 8px; border-radius: 5px; background: #383838; font-weight: 600; margin-right: 16px; }
.pages { height: 144px; border-bottom: 1px solid #444; }
.sec-title { display: flex; align-items: center; height: 40px; padding: 0 15px 0 4px; }
.sec-title b { margin-left: 4px; }
.sec-title .muted { color: #808080; }
.pages li { height: 24px; margin: 0 8px 8px; padding-left: 8px; line-height: 24px; border-radius: 5px; color: #e8e8e8; letter-spacing: -.03px; }
.pages ul { padding-top: 4px; }
.pages .current { background: #383838; font-weight: 600; color: #fff; }
.layers-title { height: 40px; border-bottom: 1px solid #444; }
.layers { padding-top: 11px; font-feature-settings: "ss02"; }
.layers li { height: 24px; margin: 0 8px 8px 12px; padding-left: 31px; display: flex; align-items: center; border-radius: 5px; color: #e6e6e6; white-space: nowrap; letter-spacing: -.03px; }
.layers svg { width: 10px; height: 10px; margin-right: 11px; color: #8c8c8c; }
.layers .picked { background: #4a5878; color: #fff; }
.layers .picked svg { color: #fff; }
.layers .root { padding-left: 7px; font-weight: 600; color: #fff; }

.right { left: 1667px; width: 241px; }
.top { height: 32px; margin-top: 8px; padding: 0 8px 0 12px; display: flex; align-items: center; }
.avatar { width: 24px; height: 24px; margin-right: 4px; border-radius: 50%; background: #c2185b; text-align: center; line-height: 23px; color: #f6c7d8; }
.play-chev { margin: 0 8px 0 13px; }
.share { width: 55px; height: 32px; border-radius: 5px; background: #0c8ce9; text-align: center; line-height: 32px; }
.modes { height: 40px; padding: 8px 16px 8px 8px; display: flex; align-items: center; }
.modes .chev { margin-left: 13px; }
.modes .chip { margin-right: 17px; }
.kind { height: 50px; padding: 0 0 0 17px; display: flex; align-items: center; border: solid #444; border-width: 1px 0; font-size: 13px; }
.kind .chev { margin-left: 7px; }
.tools { margin-left: auto; margin-right: 6px; display: flex; align-items: center; }
.tools > svg { width: 28px; height: 14px; overflow: visible; }
.tools > svg[width="16"] { height: 4px; }
.tools > svg[height="10"] { height: 10px; }
.tools > svg[height="12"] { height: 12px; }
.tools > svg[height="13"] { height: 13px; }
.sect { border-bottom: 1px solid #444; height: 85px; padding-left: 16px; }
.head { height: 40px; display: flex; align-items: center; }
.grid { margin-top: 4px; display: grid; grid-template-columns: 89px 88px 24px; column-gap: 8px; row-gap: 8px; align-items: center; justify-items: center; }
.position { height: 149px; }
.field { width: 100%; height: 24px; border-radius: 5px; background: #383838; display: flex; align-items: center; }
.field em { width: 24px; display: grid; place-items: center; color: #a8a8a8; }
.trio { width: 88px; height: 24px; border-radius: 5px; overflow: hidden; display: grid; grid-template-columns: repeat(3, 1fr); gap: 1px; }
.trio:first-child { justify-self: start; }
.trio span { background: #383838; display: grid; place-items: center; }
.thin { stroke: #8f8f8f; }
.bar { stroke: #fff; stroke-width: 2; }
.layout { height: 117px; }
.tick { margin-top: 8px; height: 24px; display: flex; align-items: center; gap: 8px; }
.tick i { width: 16px; height: 16px; border: 1px solid #484848; border-radius: 4px; background: #383838; display: grid; place-items: center; }
.tick svg { width: 9px; height: 9px; }
.fill { height: 117px; }
.paint { margin-top: 4px; display: flex; align-items: center; height: 24px; }
.hex { width: 102px; height: 24px; background: #383838; border-radius: 5px 0 0 5px; display: flex; align-items: center; padding-left: 5px; }
.hex i { width: 14px; height: 14px; margin-right: 6px; background: #fff; border-radius: 2px; }
.alpha { width: 54px; height: 24px; margin-left: 1px; padding: 0 7px 0 8px; background: #383838; border-radius: 0 5px 5px 0; line-height: 24px; display: flex; justify-content: space-between; }
.alpha em { color: #b3b3b3; }
.slim { height: 41px; padding-left: 16px; display: flex; align-items: center; border-bottom: 1px solid #444; }
.swatches i { width: 16px; height: 16px; border-radius: 50%; margin-right: 8px; }
.swatches span { width: 32px; padding-left: 1px; }
.swatches i.push { margin-left: auto; }
.white { background: #fff; }
.navy { background: #1a1a2b; border: 1px solid #333346; }
.blue { background: #38a1ff; }
.cols { margin: 0 14px 0 6px; }
.select { width: 73px; height: 24px; padding: 0 9px 0 7px; border: 1px solid #444; border-radius: 5px; display: flex; align-items: center; justify-content: space-between; }
.select--grid { width: 125px; }
.export { border: 0; }
.exports { margin-top: 4px; display: flex; align-items: center; gap: 8px; }
.exports > svg { margin-left: 3px; }
.export-btn { width: 209px; height: 24px; margin-top: 8px; border: 1px solid #444; border-radius: 5px; }
.help { position: absolute; left: 197px; top: 843px; width: 32px; height: 32px; border-radius: 50%; background: #1e1e1e; display: grid; place-items: center; }

.dock { position: absolute; left: 750px; top: 851px; width: 421px; height: 48px; padding-left: 8px; display: flex; align-items: center; border-radius: 13px; background: #2c2c2c; box-shadow: 0 1px 5px rgba(0,0,0,.5), inset 0 1px #474747; }
.dock > span { width: 32px; height: 32px; border-radius: 5px; display: grid; place-items: center; }
.dock .active { background: #0c8ce9; }
.dock .chev { margin: 0 13px 0 4px; }
.dock .chev:nth-of-type(4) { margin-right: 12px; }
.dock > .solo { margin-right: 8px; }
.dev { margin-left: 1px; height: 46px; padding-left: 12px; border-left: 1px solid #444; display: flex; align-items: center; }
.toggle { width: 40px; height: 24px; border-radius: 5px; background: #383838; }
.toggle i { width: 23px; height: 24px; border: 1px solid #444; border-radius: 5px; background: #2c2c2c; display: grid; place-items: center; }

/* taskbar */
.taskbar { flex: none; position: relative; height: 48px; padding-bottom: 1px; border-top: 1px solid #3e4245; display: flex; align-items: center; background: linear-gradient(90deg, #1d2326, #1c2327 45%, #202225 60%, #1a262d 85%); font-family: "Open Sans", "Noto Sans", sans-serif; font-weight: 400; font-size: 12px; }
.weather { display: flex; align-items: center; width: 705px; padding-left: 21px; }
.weather-icon { position: relative; width: 29px; }
.weather-icon b { position: absolute; left: 9px; top: -1px; width: 16px; height: 16px; border-radius: 50%; background: #ff97a0; color: #1b1b1b; font-weight: 400; text-align: center; line-height: 16px; }
.weather-text { margin-top: -1px; line-height: 16px; font-size: 11.500px; display: flex; flex-direction: column; }
.weather-text small { margin: 0; font-size: 11.500px; line-height: 16px; letter-spacing: -.08px; color: #c4c7c9; opacity: 1; }
.apps { display: flex; align-items: center; gap: 20px; }
.start { margin-right: -7px; }
.search { width: 220px; height: 32px; margin-right: -8px; padding: 0 13px 0 10px; border: 1px solid #515659; border-radius: 16px; background: #3b4043; display: flex; align-items: center; color: #d5d7d8; font-size: 13px; }
.search span { margin: -2px 0 0 9px; letter-spacing: -.1px; }
.app { position: relative; height: 40px; display: grid; place-items: center; }
.app::after { content: ""; position: absolute; bottom: 0; left: 9px; width: 6px; height: 3px; border-radius: 2px; background: #969a9c; }
.app.current { width: 40px; border-radius: 4px; background: #2b3134; border: 1px solid #33393c; }
.app.running { margin-right: -8px; }
.app.current::after { left: 11px; width: 16px; background: #d3cd9b; }
.app b { position: absolute; left: 20px; top: 2px; width: 16px; height: 16px; border-radius: 50%; background: #7e57c2; font: 500 10px/15px Roboto, sans-serif; text-align: center; }
.tray { margin-left: auto; padding-right: 20px; display: flex; align-items: center; }
.tray svg:nth-of-type(2) { margin-left: 20px; }
.tray svg:nth-of-type(3) { margin-left: 16px; }
.tray svg:nth-of-type(4) { margin-left: 8px; }
.clock { width: 71px; margin-top: -1px; text-align: right; font-size: 11.500px; line-height: 16px; }
.tray .clock + svg { margin-left: 8px; }
.copilot { position: relative; margin-left: 17px; width: 24px; }
.copilot b { position: absolute; left: 5px; top: 14px; width: 18px; height: 8px; border-radius: 2px; background: #ffd21a; color: #1b1b1b; font: 700 7px/8px Roboto, sans-serif; text-align: center; }
```
